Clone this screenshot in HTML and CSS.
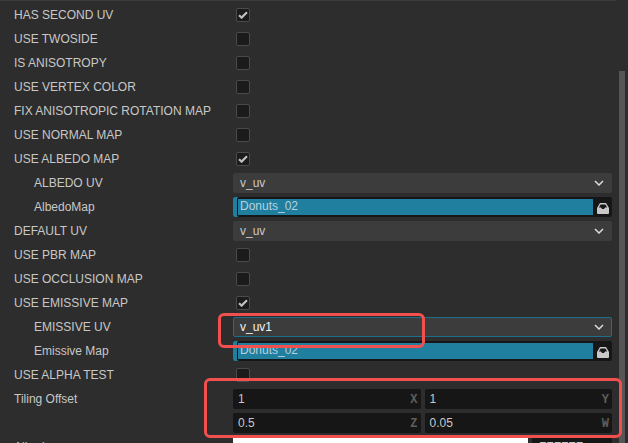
FILE: index.html
```html
<!DOCTYPE html>
<html lang="en">
<head>
<meta charset="utf-8">
<title>Material Inspector</title>
<link rel="stylesheet" href="styles.css">
</head>
<body>
<svg class="defs" width="0" height="0" aria-hidden="true">
  <symbol id="check" viewBox="0 0 10 8"><path d="M1 4.2 3.6 6.6 9 1.2" fill="none" stroke="currentColor" stroke-width="2.2"/></symbol>
  <symbol id="chev" viewBox="0 0 10 6"><path d="M1 1 5 5 9 1" fill="none" stroke="currentColor" stroke-width="1.5"/></symbol>
  <symbol id="tray" viewBox="0 0 12 11"><path fill="currentColor" fill-rule="evenodd" d="M3 0h6l3 5v5a1 1 0 0 1-1 1H1a1 1 0 0 1-1-1V5zM3.6 1.4 1.9 4.6H4L5 6h2l1-1.4h2.1L8.4 1.4z"/></symbol>
</svg>
<div class="panel">
  <div class="topline"></div>
  <div class="rows">
    <div class="row"><span class="label">HAS SECOND UV</span><span class="box"><svg class="tick"><use href="#check"/></svg></span></div>
    <div class="row"><span class="label">USE TWOSIDE</span><span class="box"></span></div>
    <div class="row"><span class="label">IS ANISOTROPY</span><span class="box"></span></div>
    <div class="row"><span class="label">USE VERTEX COLOR</span><span class="box"></span></div>
    <div class="row"><span class="label">FIX ANISOTROPIC ROTATION MAP</span><span class="box"></span></div>
    <div class="row"><span class="label">USE NORMAL MAP</span><span class="box"></span></div>
    <div class="row"><span class="label">USE ALBEDO MAP</span><span class="box"><svg class="tick"><use href="#check"/></svg></span></div>
    <div class="row"><span class="label sub">ALBEDO UV</span><div class="select"><span>v_uv</span><svg class="chev"><use href="#chev"/></svg></div></div>
    <div class="row"><span class="label sub">AlbedoMap</span><div class="asset"><span class="asset-name">Donuts_02</span><svg class="tray"><use href="#tray"/></svg></div></div>
    <div class="row"><span class="label">DEFAULT UV</span><div class="select"><span>v_uv</span><svg class="chev"><use href="#chev"/></svg></div></div>
    <div class="row"><span class="label">USE PBR MAP</span><span class="box"></span></div>
    <div class="row"><span class="label">USE OCCLUSION MAP</span><span class="box"></span></div>
    <div class="row"><span class="label">USE EMISSIVE MAP</span><span class="box"><svg class="tick"><use href="#check"/></svg></span></div>
    <div class="row"><span class="label sub">EMISSIVE UV</span><div class="select active"><span>v_uv1</span><svg class="chev"><use href="#chev"/></svg></div></div>
    <div class="row"><span class="label sub">Emissive Map</span><div class="asset"><span class="asset-name">Donuts_02</span><svg class="tray"><use href="#tray"/></svg></div></div>
    <div class="row"><span class="label">USE ALPHA TEST</span><span class="box"></span></div>
    <div class="row"><span class="label">Tiling Offset</span><div class="vec"><div class="num"><span>1</span><b>X</b></div><div class="num"><span>1</span><b>Y</b></div></div></div>
    <div class="row"><span class="label"></span><div class="vec"><div class="num"><span>0.5</span><b>Z</b></div><div class="num"><span>0.05</span><b>W</b></div></div></div>
    <div class="row"><span class="label">Albedo</span><div class="color"><div class="swatch"></div><div class="hex">FFFFFF</div></div></div>
  </div>
  <div class="scrollbar"></div>
  <div class="mark mark-uv"></div>
  <div class="mark mark-tiling"></div>
</div>
</body>
</html>
```

FILE: styles.css
```css
html, body {
  margin: 0;
  height: 443px;
  overflow: hidden;
  background: #2d2d2d;
}
.defs { position: absolute; }
.panel {
  position: relative;
  height: 443px;
  overflow: hidden;
  font: 12px "Liberation Sans", Arial, sans-serif;
  color: #c8c8c8;
}
.topline {
  width: 616px;
  height: 1px;
  background: #3d3d3d;
}
.rows {
  display: flex;
  flex-direction: column;
  gap: 4px;
  width: 612px;
  padding-top: 4px;
}
.row {
  display: flex;
  align-items: center;
  height: 20px;
  flex: none;
}
.label {
  flex: none;
  width: 233px;
  padding-left: 14px;
  box-sizing: border-box;
  white-space: nowrap;
}
.label.sub { padding-left: 34px; }
.box {
  flex: none;
  display: flex;
  align-items: center;
  justify-content: center;
  width: 14px;
  height: 14px;
  margin-left: 3px;
  box-sizing: border-box;
  background: #1b1b1b;
  border: 1px solid #4b4b4b;
  border-radius: 2px;
}
.tick { width: 10px; height: 8px; color: #c0c0c0; }
.select {
  flex: 1;
  height: 20px;
  display: flex;
  align-items: center;
  justify-content: space-between;
  padding: 0 8px 0 7px;
  box-sizing: border-box;
  background: #3c3c3c;
  border-radius: 2px;
  color: #c8c8c8;
}
.select.active {
  border: 1px solid #1c6e8a;
  padding: 0 7px 0 6px;
  color: #f2f2f2;
}
.chev { width: 10px; height: 6px; color: #dcdcdc; }
.asset {
  flex: 1;
  height: 20px;
  display: flex;
  align-items: center;
  gap: 4px;
  padding: 2px 3px 2px 5px;
  box-sizing: border-box;
  background: #161616;
  border-radius: 2px;
  box-shadow: inset 4px 0 0 #207e9e;
}
.asset-name {
  flex: 1;
  height: 16px;
  line-height: 15px;
  padding-left: 2px;
  background: #207e9e;
  color: #b5d3de;
}
.tray { width: 12px; height: 11px; color: #c8c8c8; flex: none; margin-top: 3px; }
.vec {
  flex: 1;
  display: flex;
  gap: 4px;
}
.num {
  flex: 1;
  height: 20px;
  display: flex;
  align-items: center;
  justify-content: space-between;
  padding: 0 3px 0 5px;
  box-sizing: border-box;
  background: #161616;
  border-radius: 2px;
  color: #c8c8c8;
}
.num b {
  font: bold 12px "Liberation Mono", monospace;
  color: #5e5e5e;
  position: relative;
  top: 1px;
}
.color {
  flex: 1;
  display: flex;
  gap: 4px;
  height: 20px;
}
.swatch { width: 295px; flex: none; background: #fff; }
.hex {
  flex: 1;
  padding-left: 7px;
  background: #161616;
  line-height: 20px;
  border-radius: 2px;
}
.scrollbar {
  position: absolute;
  left: 619px;
  top: 71px;
  bottom: 0;
  width: 6px;
  background: #565656;
}
.mark {
  position: absolute;
  box-sizing: border-box;
  border: 3px solid #f2504e;
  border-radius: 6px;
}
.mark-uv { left: 218px; top: 313px; width: 207px; height: 35px; }
.mark-tiling { left: 204px; top: 378px; width: 418px; height: 60px; }
```
